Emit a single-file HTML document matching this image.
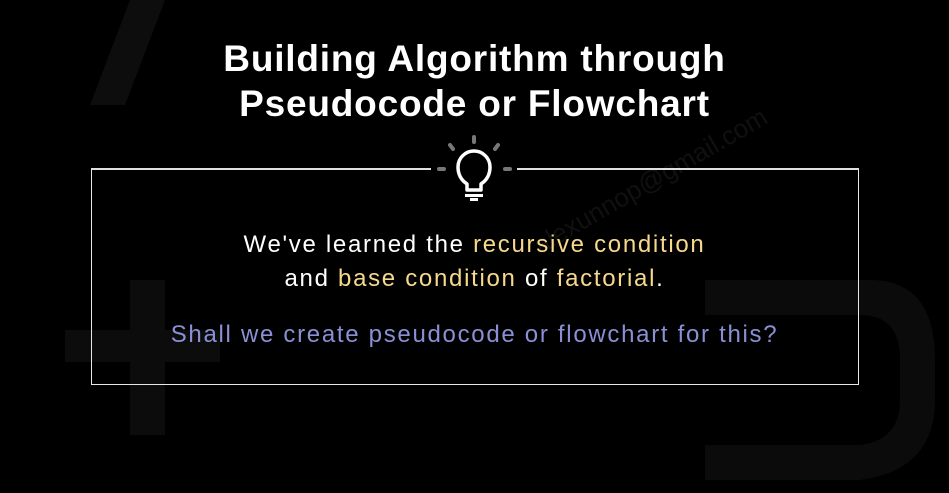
<!DOCTYPE html>
<html><head><meta charset="utf-8"><style>
html,body{margin:0;padding:0;}
body{width:949px;height:493px;background:#000;position:relative;overflow:hidden;font-family:"Liberation Sans",sans-serif;}
.t{position:absolute;left:0;width:949px;text-align:center;color:#fff;font-weight:bold;font-size:37px;letter-spacing:0.8px;line-height:45px;top:36px;}
.box{position:absolute;left:91px;top:168px;width:766px;height:216px;border:1.5px solid #e8e8e8;border-top:none;}
.ln{position:absolute;top:168px;height:1.5px;background:#e0e0e0;}
.p{position:absolute;left:0;width:949px;text-align:center;font-size:24px;color:#fff;letter-spacing:1.7px;}
.y{color:#f6d98c;}
.u{color:#8a90d4;}
</style></head><body>
<svg width="949" height="493" style="position:absolute;left:0;top:0">
<polygon points="90,105 130,0 165,0 125,105" fill="#0d0d0d"/>
<rect x="65" y="330" width="155" height="32" fill="#0c0c0c"/>
<rect x="130" y="280" width="35" height="155" fill="#0c0c0c"/>
<path d="M705 280 L870 280 Q935 280 935 360 L935 400 Q935 470 860 480 L705 480 L705 445 L860 445 Q900 440 900 400 L900 360 Q900 315 860 315 L705 315 Z" fill="#0b0b0b"/>
<text x="520" y="260" transform="rotate(-30 520 220)" font-size="26" fill="#101010" font-family="Liberation Sans">alexunnop@gmail.com</text>
</svg>
<div class="t">Building Algorithm through<br>Pseudocode or Flowchart</div>
<div class="box"></div>
<div class="ln" style="left:91px;width:340px"></div>
<div class="ln" style="left:517px;width:342px"></div>
<svg width="100" height="90" style="position:absolute;left:425px;top:130px" viewBox="425 130 100 90">
<g stroke="#777" stroke-width="4" stroke-linecap="round">
<line x1="474" y1="137" x2="474" y2="142"/>
<line x1="450" y1="145" x2="453" y2="149"/>
<line x1="498" y1="145" x2="495" y2="149"/>
<line x1="439" y1="169" x2="444" y2="169"/>
<line x1="505" y1="169" x2="510" y2="169"/>
</g>
<path d="M467 190 L467 184 Q458 178 458 167 A16 16 0 0 1 490 167 Q490 178 481 184 L481 190 Z" fill="none" stroke="#fff" stroke-width="3.5" stroke-linejoin="round"/>
<rect x="465" y="194" width="18" height="3" fill="#fff"/>
<rect x="470" y="198" width="8" height="3" fill="#fff"/>
</svg>
<div class="p" style="top:231px">We've learned the <span class="y">recursive condition</span></div>
<div class="p" style="top:265px">and <span class="y">base condition</span> of <span class="y">factorial</span>.</div>
<div class="p u" style="top:321px">Shall we create pseudocode or flowchart for this?</div>
</body></html>
